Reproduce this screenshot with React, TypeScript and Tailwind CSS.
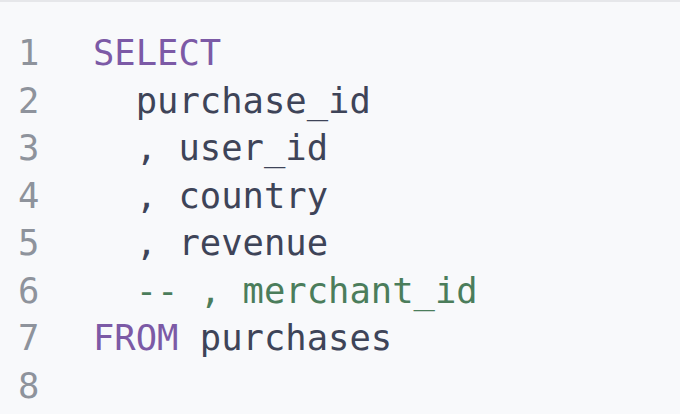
const lines: { n: number; parts: { t: string; c: string }[] }[] = [
  { n: 1, parts: [{ t: 'SELECT', c: 'text-[#7c5aa6]' }] },
  { n: 2, parts: [{ t: '  purchase_id', c: 'text-[#3e4458]' }] },
  { n: 3, parts: [{ t: '  , user_id', c: 'text-[#3e4458]' }] },
  { n: 4, parts: [{ t: '  , country', c: 'text-[#3e4458]' }] },
  { n: 5, parts: [{ t: '  , revenue', c: 'text-[#3e4458]' }] },
  { n: 6, parts: [{ t: '  -- , merchant_id', c: 'text-[#4b7d5b]' }] },
  {
    n: 7,
    parts: [
      { t: 'FROM', c: 'text-[#7c5aa6]' },
      { t: ' purchases', c: 'text-[#3e4458]' },
    ],
  },
  { n: 8, parts: [{ t: '', c: '' }] },
];

export default function App() {
  return (
    <div className="h-screen w-full overflow-hidden bg-[#f8f9fb] border-t-2 border-[#e6e7ea]">
      <div
        className="pt-[27px] pl-[18px] text-[35.5px] leading-[47.5px] whitespace-pre"
        style={{ fontFamily: '"DejaVu Sans Mono", monospace' }}
      >
        {lines.map((line) => (
          <div key={line.n} className="flex">
            <span className="w-[75px] shrink-0 text-[#8e939c]">{line.n}</span>
            <span>
              {line.parts.map((p, i) => (
                <span key={i} className={p.c}>
                  {p.t}
                </span>
              ))}
            </span>
          </div>
        ))}
      </div>
    </div>
  );
}
